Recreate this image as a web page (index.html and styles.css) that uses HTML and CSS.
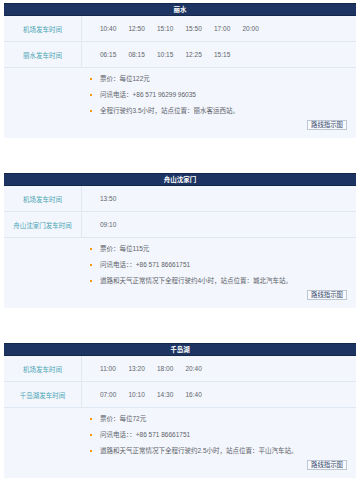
FILE: index.html
```html
<!DOCTYPE html>
<html lang="zh">
<head>
<meta charset="utf-8">
<title>机场巴士</title>
<link rel="stylesheet" href="styles.css">
</head>
<body>
<div class="page">
  <section class="route">
    <div class="route-head">丽水</div>
    <div class="row">
      <div class="label">机场发车时间</div>
      <div class="times"><span>10:40</span><span>12:50</span><span>15:10</span><span>15:50</span><span>17:00</span><span>20:00</span></div>
    </div>
    <div class="row">
      <div class="label">丽水发车时间</div>
      <div class="times"><span>06:15</span><span>08:15</span><span>10:15</span><span>12:25</span><span>15:15</span></div>
    </div>
    <div class="info">
      <ul>
        <li>票价：每位122元</li>
        <li>问讯电话：+86 571 96299 96035</li>
        <li>全程行驶约3.5小时，站点位置：丽水客运西站。</li>
      </ul>
      <div class="actions"><button class="map-btn">路线指示图</button></div>
    </div>
  </section>

  <section class="route">
    <div class="route-head">舟山沈家门</div>
    <div class="row">
      <div class="label">机场发车时间</div>
      <div class="times"><span>13:50</span></div>
    </div>
    <div class="row">
      <div class="label">舟山沈家门发车时间</div>
      <div class="times"><span>09:10</span></div>
    </div>
    <div class="info">
      <ul>
        <li>票价：每位115元</li>
        <li>问讯电话：：+86 571 86661751</li>
        <li>道路和天气正常情况下全程行驶约4小时，站点位置：城北汽车站。</li>
      </ul>
      <div class="actions"><button class="map-btn">路线指示图</button></div>
    </div>
  </section>

  <section class="route">
    <div class="route-head">千岛湖</div>
    <div class="row">
      <div class="label">机场发车时间</div>
      <div class="times"><span>11:00</span><span>13:20</span><span>18:00</span><span>20:40</span></div>
    </div>
    <div class="row">
      <div class="label">千岛湖发车时间</div>
      <div class="times"><span>07:00</span><span>10:10</span><span>14:30</span><span>16:40</span></div>
    </div>
    <div class="info">
      <ul>
        <li>票价：每位72元</li>
        <li>问讯电话：：+86 571 86661751</li>
        <li>道路和天气正常情况下全程行驶约2.5小时，站点位置：平山汽车站。</li>
      </ul>
      <div class="actions"><button class="map-btn">路线指示图</button></div>
    </div>
  </section>
</div>
</body>
</html>
```

FILE: styles.css
```css
* { box-sizing: border-box; }

html, body {
  margin: 0;
  padding: 0;
  background: #ffffff;
}

body {
  font-family: "Liberation Sans", "Noto Sans CJK SC", sans-serif;
  font-size: 6.5px;
  color: #555b63;
}

.page {
  padding: 3px 1px 0 4px;
}

.route {
  margin-bottom: 35px;
  background: #f3f6fc;
}

.route-head {
  height: 13px;
  line-height: 12px;
  background: #1d3463;
  border-top: 1px solid #15264b;
  border-bottom: 1px solid #15264b;
  color: #ffffff;
  font-weight: bold;
  font-size: 6.5px;
  text-align: center;
}

.row {
  display: flex;
  height: 26px;
  border-bottom: 1px solid #dfe8f2;
}

.label {
  width: 78px;
  flex: none;
  border-right: 1px solid #dfe8f2;
  display: flex;
  align-items: center;
  justify-content: center;
  color: #4aa5b5;
}

.times {
  display: flex;
  align-items: center;
  padding-left: 18px;
  color: #60656c;
}

.times span {
  width: 28.5px;
  flex: none;
}

.info {
  padding: 3px 9px 8px 82px;
}

.info ul {
  list-style: none;
  margin: 0;
  padding: 0;
}

.info li {
  position: relative;
  height: 16px;
  line-height: 16px;
  padding-left: 14px;
  color: #5d6269;
  white-space: nowrap;
}

.info li::before {
  content: "";
  position: absolute;
  left: 4px;
  top: 7px;
  width: 2px;
  height: 2px;
  background: #f39a00;
}

.actions {
  display: flex;
  justify-content: flex-end;
  margin-top: 1px;
}

.map-btn {
  height: 10px;
  width: 40px;
  padding: 0;
  border: 1px solid #bcc7d3;
  background: #f9fafc;
  color: #34496f;
  font-family: "Noto Sans CJK SC", sans-serif;
  font-size: 6.4px;
  line-height: 8px;
  white-space: nowrap;
}
```
